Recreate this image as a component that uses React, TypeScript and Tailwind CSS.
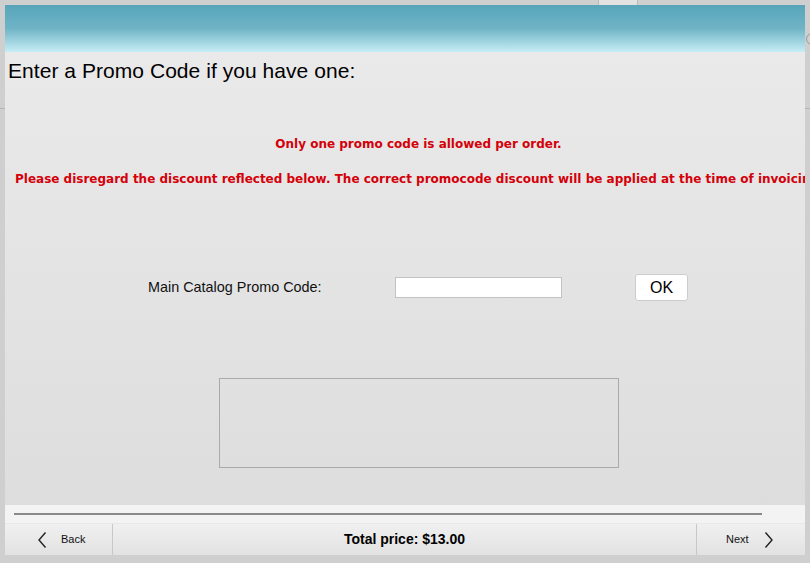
import React from "react";

function Chevron({ dir }: { dir: "left" | "right" }) {
  return (
    <svg width="10" height="18" viewBox="0 0 10 18" fill="none">
      {dir === "left" ? (
        <path d="M8.5 1.5 L2 9 L8.5 16.5" stroke="#222" strokeWidth="1.4" />
      ) : (
        <path d="M1.5 1.5 L8 9 L1.5 16.5" stroke="#222" strokeWidth="1.4" />
      )}
    </svg>
  );
}

export default function App() {
  return (
    <div className="relative w-[810px] h-[563px] overflow-hidden bg-[#cfcfcf] font-['Liberation_Sans',Arial,sans-serif]">
      {/* page behind the dialog */}
      <div className="flex h-[5px] text-[9px] leading-none text-[#888]">
        <div className="w-[598px]" />
        <div className="w-[40px] h-[6px] bg-[#e2e2e2] border-x border-[#bbb]" />
      </div>
      <div className="absolute left-0 top-[108px] w-[5px] h-px bg-[#b5b5b5]" />
      <div className="absolute right-0 top-[108px] w-[5px] h-px bg-[#b5b5b5]" />
      <div className="absolute left-[806px] top-[33px] w-[12px] h-[12px] rounded-full border border-[#999]" />

      {/* dialog */}
      <div className="absolute left-[5px] top-[5px] w-[800px] h-[550px] flex flex-col overflow-hidden bg-gradient-to-b from-[#ebebeb] to-[#dcdcdc]">
        <div className="h-[47px] shrink-0 bg-gradient-to-b from-[#57a5b9] via-[#6fb4c6] to-[#c6edf5]" />

        <h1 className="pl-[3px] pt-[7px] text-[21px] leading-[24px] tracking-[0.05px] text-black">
          Enter a Promo Code if you have one:
        </h1>

        <div className="mt-[53px] ml-[10px] w-[807px] text-center font-['DejaVu_Sans',Tahoma,sans-serif] font-bold text-[12px] text-[#d4000a] whitespace-nowrap">
          <p className="leading-[16px]">Only one promo code is allowed per order.</p>
          <p className="mt-[19px] leading-[16px] text-left">
            Please disregard the discount reflected below. The correct promocode discount will be applied at the time of invoicing.
          </p>
        </div>

        <div className="mt-[87px] flex items-center h-[27px]">
          <span className="ml-[143px] w-[247px] text-[14.4px] text-[#111]">Main Catalog Promo Code:</span>
          <input className="w-[167px] h-[21px] bg-white border border-[#c2c2c2] outline-none" />
          <button className="ml-[73px] w-[53px] h-[27px] bg-white border border-[#cdcdcd] rounded-[3px] text-[16px] text-black">
            OK
          </button>
        </div>

        <div className="mt-[77px] ml-[214px] w-[400px] h-[90px] border border-[#aaa]" />

        <div className="mt-auto h-[18px] bg-[#f3f3f3] flex items-center px-[9px]">
          <div className="w-[748px] h-[2px] bg-[#8a8a8a]" />
        </div>
        <div className="h-[32px] flex bg-gradient-to-b from-[#f0f0f0] to-[#e2e2e2] border-t border-[#e8e8e8]">
          <button className="w-[108px] border-r border-[#c8c8c8] flex items-center pl-[32px] gap-[14px] text-[11px] text-[#111]">
            <Chevron dir="left" />
            Back
          </button>
          <div className="flex-1 flex items-center justify-center text-[14px] font-bold text-black">
            Total price: $13.00
          </div>
          <button className="w-[109px] border-l border-[#c8c8c8] flex items-center pl-[29px] gap-[15px] text-[11px] text-[#111]">
            Next
            <Chevron dir="right" />
          </button>
        </div>
      </div>
    </div>
  );
}
